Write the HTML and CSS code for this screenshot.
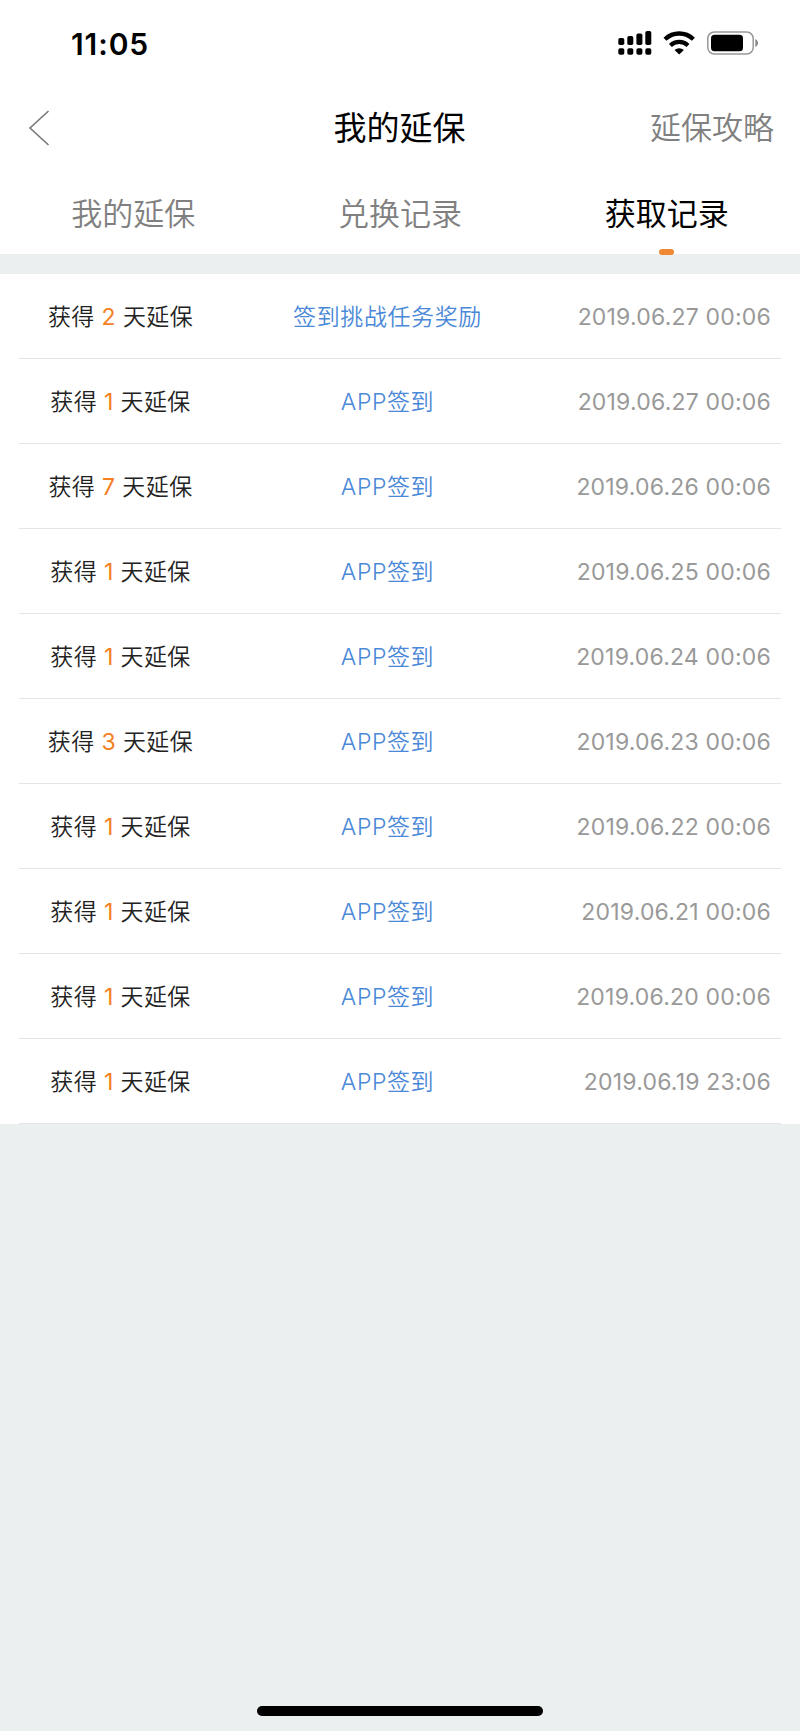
FILE: index.html
```
<!DOCTYPE html>
<html lang="zh-CN">
<head>
    <meta charset="UTF-8">
    <meta name="viewport" content="width=device-width, initial-scale=1.0">
    <title>我的延保</title>
    <link rel="stylesheet" href="styles.css">
</head>
<body>

    <div class="status-bar">
        <span class="time">11:05</span>
        <svg class="status-icons" width="142" height="26" viewBox="0 0 142 26">
            <!-- signal -->
            <rect x="0.3" y="8" width="6" height="7" rx="1.8"/>
            <rect x="9.3" y="6" width="6" height="9" rx="1.8"/>
            <rect x="18.4" y="3.4" width="6" height="11.6" rx="1.8"/>
            <rect x="27.3" y="1" width="6" height="14" rx="1.8"/>
            <rect x="0.3" y="18.3" width="6" height="6.5" rx="1.8"/>
            <rect x="9.3" y="18.3" width="6" height="6.5" rx="1.8"/>
            <rect x="18.4" y="18.3" width="6" height="6.5" rx="1.8"/>
            <rect x="27.3" y="18.3" width="6" height="6.5" rx="1.8"/>
            <!-- wifi -->
            <path d="M47 9.2a20.5 20.5 0 0 1 28.4 0" fill="none" stroke="#000" stroke-width="4.3"/>
            <path d="M52.4 15.4a12.8 12.8 0 0 1 17.6 0" fill="none" stroke="#000" stroke-width="4.2"/>
            <path d="M61.2 24.5l-4.7-4.5a7 7 0 0 1 9.4 0z"/>
            <!-- battery -->
            <rect x="89.8" y="2" width="45.4" height="22" rx="6.5" fill="none" stroke="#999" stroke-width="1.5"/>
            <rect x="93" y="4.7" width="32" height="16.6" rx="3.5"/>
            <path d="M137.3 9c3.600 1.600 3.600 6.400 0 8z" fill="#888"/>
        </svg>
    </div>

    <div class="header">
        <svg class="back" width="22" height="36" viewBox="0 0 22 36">
            <path d="M20.5 1L2 18l18.500 17" fill="none" stroke="#777" stroke-width="1.6"/>
        </svg>
        <h1>我的延保</h1>
        <span class="guide">延保攻略</span>
    </div>

    <div class="tabs">
        <div class="tab">我的延保</div>
        <div class="tab">兑换记录</div>
        <div class="tab active">获取记录</div>
    </div>

    <ul class="records">
        <li><span class="days">获得 <b>2</b> 天延保</span><span class="source">签到挑战任务奖励</span><span class="date">2019.06.27 00:06</span></li>
        <li><span class="days">获得 <b>1</b> 天延保</span><span class="source">APP签到</span><span class="date">2019.06.27 00:06</span></li>
        <li><span class="days">获得 <b>7</b> 天延保</span><span class="source">APP签到</span><span class="date">2019.06.26 00:06</span></li>
        <li><span class="days">获得 <b>1</b> 天延保</span><span class="source">APP签到</span><span class="date">2019.06.25 00:06</span></li>
        <li><span class="days">获得 <b>1</b> 天延保</span><span class="source">APP签到</span><span class="date">2019.06.24 00:06</span></li>
        <li><span class="days">获得 <b>3</b> 天延保</span><span class="source">APP签到</span><span class="date">2019.06.23 00:06</span></li>
        <li><span class="days">获得 <b>1</b> 天延保</span><span class="source">APP签到</span><span class="date">2019.06.22 00:06</span></li>
        <li><span class="days">获得 <b>1</b> 天延保</span><span class="source">APP签到</span><span class="date">2019.06.21 00:06</span></li>
        <li><span class="days">获得 <b>1</b> 天延保</span><span class="source">APP签到</span><span class="date">2019.06.20 00:06</span></li>
        <li><span class="days">获得 <b>1</b> 天延保</span><span class="source">APP签到</span><span class="date">2019.06.19 23:06</span></li>
    </ul>

    <div class="home-bar"></div>

</body>
</html>
```
FILE: styles.css
```
* { box-sizing: border-box; }
body { margin: 0; height: 1731px; display: flex; flex-direction: column; background: #ebeff0; font-family: Inter, "Noto Sans CJK SC", sans-serif; }

.status-bar { height: 86px; padding: 0 40px 0 71px; display: flex; justify-content: space-between; align-items: center; background: #fff; }
.time { padding-top: 2px; font-size: 30px; font-weight: 600; letter-spacing: 0.9px; }

.header { height: 84px; padding: 0 26px 1px 28px; display: grid; grid-template-columns: 1fr auto 1fr; align-items: center; background: #fff; }
.back { display: block; }
h1 { margin: 0 3px 0 0; font-size: 33px; font-weight: 400; line-height: 48px; color: #000; }
.guide { justify-self: end; font-size: 31px; font-weight: 350; line-height: 46px; color: #808080; }

.tabs { height: 84px; display: grid; grid-template-columns: repeat(3, 1fr); background: #fff; }
.tab { position: relative; padding-top: 3px; text-align: center; font-size: 31px; line-height: 81px; font-weight: 350; color: #808080; }
.tab.active { font-weight: 400; color: #000; }
.tab.active::after { content: ""; position: absolute; left: 50%; bottom: -1px; width: 15px; height: 6px; margin-left: -7.5px; border-radius: 3px; background: #f08832; }

.records { margin: 20px 0 0; padding: 0 19px; list-style: none; background: #fff; }
.records li { height: 85px; padding-top: 2px; display: grid; grid-template-columns: 203px 330px 1fr; align-items: center; border-bottom: 1px solid #e5e6e7; font-size: 23px; font-weight: 350; line-height: 34px; white-space: nowrap; }
.days { text-align: center; color: #222; letter-spacing: 0.4px; }
.days b { font-weight: 400; color: #f5801f; }
.source { padding-left: 1px; text-align: center; color: #4a88d8; letter-spacing: 0.6px; }
.date { padding-right: 10px; text-align: right; font-weight: 400; color: #999; letter-spacing: 0.2px; }

.home-bar { width: 286px; height: 10px; margin: auto auto 15px; border-radius: 5px; background: #000; }
```
